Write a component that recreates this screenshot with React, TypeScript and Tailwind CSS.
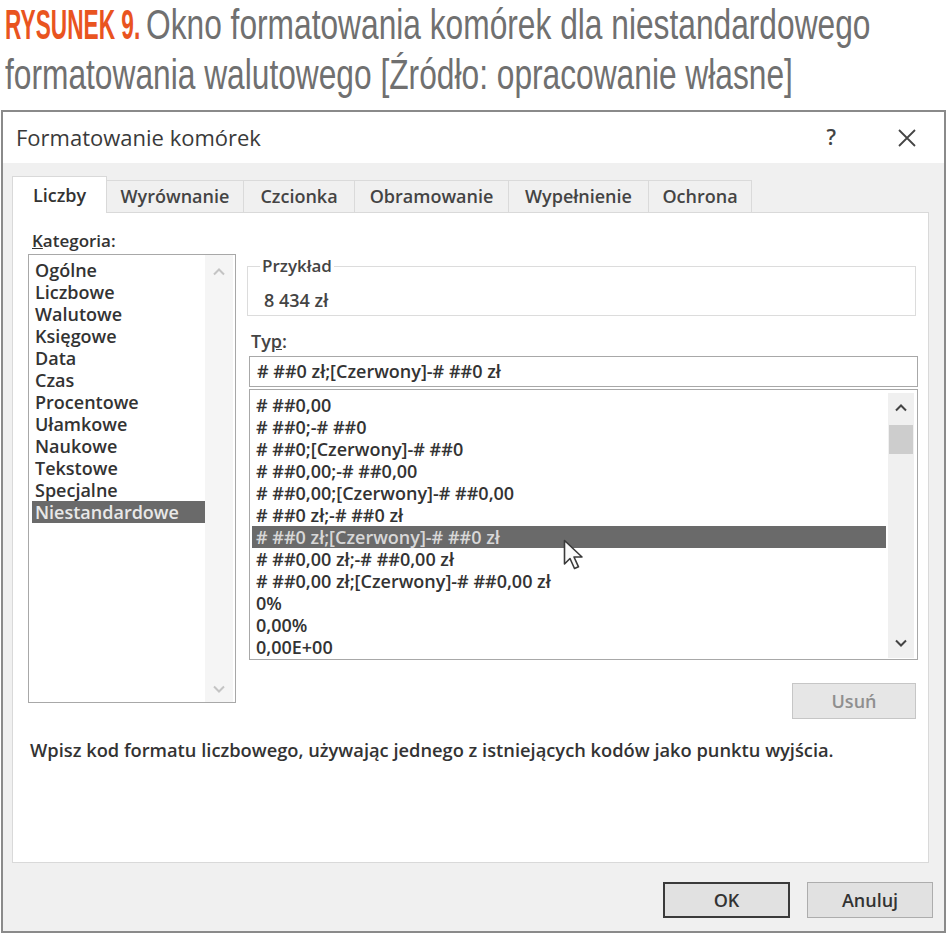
import React from "react";

const catItems = [
  "Ogólne",
  "Liczbowe",
  "Walutowe",
  "Księgowe",
  "Data",
  "Czas",
  "Procentowe",
  "Ułamkowe",
  "Naukowe",
  "Tekstowe",
  "Specjalne",
  "Niestandardowe",
];

const typItems = [
  "# ##0,00",
  "# ##0;-# ##0",
  "# ##0;[Czerwony]-# ##0",
  "# ##0,00;-# ##0,00",
  "# ##0,00;[Czerwony]-# ##0,00",
  "# ##0 zł;-# ##0 zł",
  "# ##0 zł;[Czerwony]-# ##0 zł",
  "# ##0,00 zł;-# ##0,00 zł",
  "# ##0,00 zł;[Czerwony]-# ##0,00 zł",
  "0%",
  "0,00%",
  "0,00E+00",
];

const tabs = [
  { label: "Liczby", w: "w-[95px]", active: true },
  { label: "Wyrównanie", w: "w-[137px]" },
  { label: "Czcionka", w: "w-[111px]" },
  { label: "Obramowanie", w: "w-[154px]" },
  { label: "Wypełnienie", w: "w-[140px]" },
  { label: "Ochrona", w: "w-[103px]" },
];

function Chevron({ up, color }: { up?: boolean; color: string }) {
  return (
    <svg width="14" height="9" viewBox="0 0 14 9">
      <polyline
        points={up ? "2,7.5 7,2.5 12,7.5" : "2,1.5 7,6.5 12,1.5"}
        fill="none"
        stroke={color}
        strokeWidth="2"
      />
    </svg>
  );
}

const dlgFont = { fontFamily: '"Open Sans", "Noto Sans", sans-serif' };
const capFont = { fontFamily: '"Liberation Sans", Arial, sans-serif' };

export default function App() {
  return (
    <div
      className="w-[947px] h-[934px] bg-white overflow-hidden text-[#333]"
      style={dlgFont}
    >
      {/* Caption */}
      <div
        className="pl-[5px] h-[100px] text-[42px] leading-[50px] text-[#707070] whitespace-nowrap overflow-hidden"
        style={capFont}
      >
        <div className="flex items-baseline h-[50px]">
          <div className="w-[141px] shrink-0">
            <span className="inline-block origin-left scale-x-[0.54] font-bold text-[#e9541f]">RYSUNEK 9.</span>
          </div>
          <span className="inline-block origin-left scale-x-[0.755]">
            Okno formatowania komórek dla niestandardowego
          </span>
        </div>
        <div className="h-[50px]">
          <span className="inline-block origin-left scale-x-[0.755]">
            formatowania walutowego [Źródło: opracowanie własne]
          </span>
        </div>
      </div>

      {/* Dialog */}
      <div className="mt-[10px] ml-[1px] w-[945px] h-[823px] border-2 border-[#8a8a8a] flex flex-col bg-white">
        {/* Title bar */}
        <div className="h-[51px] flex items-center pl-[13px] shrink-0">
          <div className="text-[22px] text-[#3a3a3a]">Formatowanie komórek</div>
          <div className="ml-auto flex items-center">
            <span className="text-[21px] font-semibold text-[#444] mr-[62px]">?</span>
            <svg width="18" height="18" viewBox="0 0 18 18" className="mr-[28px]">
              <path d="M1 1 L17 17 M17 1 L1 17" stroke="#444" strokeWidth="1.8" />
            </svg>
          </div>
        </div>

        {/* Body */}
        <div className="flex-1 bg-[#f0f0f0] pt-[13px] pl-[9px] flex flex-col">
          {/* Tabs */}
          <div className="flex items-end h-[36px]">
            {tabs.map((t) =>
              t.active ? (
                <div
                  key={t.label}
                  className={`${t.w} h-[37px] -mb-px relative z-10 bg-white border border-b-0 border-[#d9d9d9] flex items-center justify-center text-[18px] font-semibold text-[#333]`}
                >
                  {t.label}
                </div>
              ) : (
                <div
                  key={t.label}
                  className={`${t.w} h-[32px] bg-[#f0f0f0] border border-b-0 border-l-0 border-[#dadada] flex items-center justify-center text-[18px] font-semibold text-[#444]`}
                >
                  {t.label}
                </div>
              )
            )}
          </div>

          {/* Panel */}
          <div className="w-[917px] h-[651px] bg-white border border-[#d9d9d9] flex flex-col">
            <div className="flex gap-[11px] pl-[15px]">
              {/* Left column */}
              <div className="w-[208px] shrink-0">
                <div className="mt-[17px] h-[22px] leading-[22px] pl-[4px] text-[17px] font-semibold text-[#333]">
                  <span className="underline">K</span>ategoria:
                </div>
                <div className="mt-[2px] h-[449px] border border-[#a8a8a8] flex pl-[3px] pt-[4px] pr-[2px] pb-[2px]">
                  <div className="flex-1 flex flex-col">
                    {catItems.map((c, i) => (
                      <div
                        key={c}
                        className={`h-[22px] leading-[22px] pl-[3px] text-[18px] font-semibold whitespace-nowrap ${
                          i === catItems.length - 1 ? "bg-[#6a6a6a] text-[#e8e8e8]" : "text-[#333]"
                        }`}
                      >
                        {c}
                      </div>
                    ))}
                  </div>
                  <div className="w-[28px] bg-[#f5f5f5] flex flex-col items-center justify-between pt-[12px] pb-[8px] -mt-[4px] -mb-[2px]">
                    <Chevron up color="#c4c4c4" />
                    <Chevron color="#c4c4c4" />
                  </div>
                </div>
              </div>

              {/* Right column */}
              <div className="w-[671px] flex flex-col">
                <fieldset className="mt-[45px] border border-[#dcdcdc] mr-[2px] pl-[12px] pb-[5px]">
                  <legend className="px-[2px] text-[17px] leading-[16px] font-semibold text-[#444]">
                    Przykład
                  </legend>
                  <div className="mt-[16px] ml-[4px] h-[20px] leading-[20px] text-[18px] font-semibold text-[#444]">
                    8 434 zł
                  </div>
                </fieldset>

                <div className="mt-[15px] ml-[4px] h-[20px] leading-[20px] text-[18px] font-semibold text-[#444]">
                  Ty<span className="underline">p</span>:
                </div>
                <div className="mt-[5px] ml-[2px] h-[31px] border border-[#a8a8a8] flex items-center pl-[7px] text-[18px] font-semibold text-[#333] whitespace-nowrap">
                  # ##0 zł;[Czerwony]-# ##0 zł
                </div>
                <div className="mt-[2px] ml-[2px] h-[271px] border border-[#a8a8a8] flex pl-[2px] pt-[4px] pr-[3px] pb-[2px] relative">
                  <div className="flex-1 flex flex-col mr-[2px]">
                    {typItems.map((c, i) => (
                      <div
                        key={c}
                        className={`h-[22px] leading-[22px] pl-[4px] text-[18px] font-semibold whitespace-nowrap ${
                          i === 6 ? "bg-[#6a6a6a] text-[#d8d8d8]" : "text-[#333]"
                        }`}
                      >
                        {c}
                      </div>
                    ))}
                  </div>
                  <div className="w-[26px] bg-[#f0f0f0] flex flex-col items-center -mt-[1px] -mb-[1px] pt-[10px] pb-[10px]">
                    <Chevron up color="#444" />
                    <div className="mt-[13px] w-[24px] h-[29px] bg-[#cdcdcd]" />
                    <div className="mt-auto">
                      <Chevron color="#444" />
                    </div>
                  </div>
                  {/* mouse cursor */}
                  <svg
                    className="absolute left-[313px] top-[149px]"
                    width="24"
                    height="32"
                    viewBox="0 0 24 32"
                  >
                    <path
                      d="M1.5 1.5 L1.5 25 L7 19.5 L11.5 29.5 L15.5 27.8 L11 18 L19 18 Z"
                      fill="#fafafa"
                      stroke="#3a3a3a"
                      strokeWidth="1.6"
                      strokeLinejoin="round"
                    />
                  </svg>
                </div>
                <div className="mt-[23px] mr-[2px] self-end w-[124px] h-[36px] bg-[#e6e6e6] border border-[#c6c6c6] flex items-center justify-center text-[18px] font-semibold text-[#8f8f8f]">
                  Usuń
                </div>
              </div>
            </div>

            <div className="mt-[21px] pl-[17px] h-[20px] leading-[20px] text-[18.3px] font-semibold text-[#333] whitespace-nowrap">
              Wpisz kod formatu liczbowego, używając jednego z istniejących kodów jako punktu wyjścia.
            </div>
          </div>

          {/* Buttons */}
          <div className="flex justify-end gap-[17px] mt-[19px] pr-[11px]">
            <div className="w-[127px] h-[36px] bg-[#e1e1e1] border-2 border-[#3a3a3a] flex items-center justify-center text-[18px] font-semibold text-[#333]">
              OK
            </div>
            <div className="w-[126px] h-[36px] bg-[#e1e1e1] border border-[#adadad] flex items-center justify-center text-[18px] font-semibold text-[#333]">
              Anuluj
            </div>
          </div>
        </div>
      </div>
    </div>
  );
}
